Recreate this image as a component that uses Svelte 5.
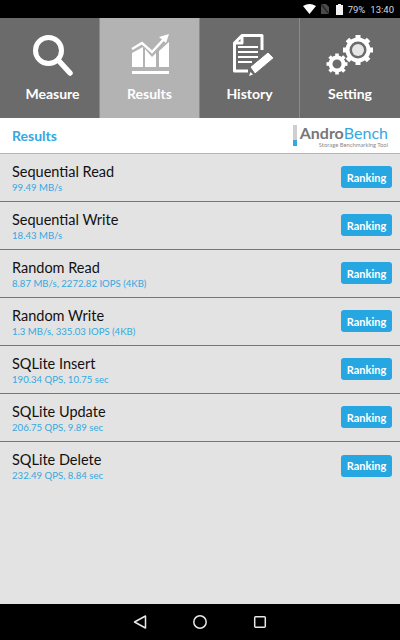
<script>
  const tabs = [
    { id: "measure", label: "Measure" },
    { id: "results", label: "Results", active: true },
    { id: "history", label: "History" },
    { id: "setting", label: "Setting" }
  ];

  const results = [
    { name: "Sequential Read", value: "99.49 MB/s" },
    { name: "Sequential Write", value: "18.43 MB/s" },
    { name: "Random Read", value: "8.87 MB/s, 2272.82 IOPS (4KB)" },
    { name: "Random Write", value: "1.3 MB/s, 335.03 IOPS (4KB)" },
    { name: "SQLite Insert", value: "190.34 QPS, 10.75 sec" },
    { name: "SQLite Update", value: "206.75 QPS, 9.89 sec" },
    { name: "SQLite Delete", value: "232.49 QPS, 8.84 sec" }
  ];

  const teeth = [0, 45, 90, 135, 180, 225, 270, 315];
</script>

<div class="screen">
  <div class="status">
    <svg class="wifi" width="13" height="10" viewBox="0 0 13 10"><path d="M0 2Q6.500 -2 13 2L6.500 10Z" fill="#fff" /></svg>
    <svg class="sim" width="8" height="10" viewBox="0 0 8 10"><path d="M0 0H5L8 3V10H0Z" fill="#4a4a4a" /><path d="M0 0L8 10" stroke="#222" stroke-width="1.200" /></svg>
    <svg class="battery" width="7" height="11" viewBox="0 0 7 11"><path d="M2 0H5V1H7V11H0V1H2Z" fill="#f2f2f2" /></svg>
    <span class="pct">79%</span>
    <span class="time">13:40</span>
  </div>

  <nav class="tabs">
    {#each tabs as tab}
      <div class="tab" class:active={tab.active}>
        <svg width="56" height="47" viewBox="0 0 56 47" fill="none">
          {#if tab.id === "measure"}
            <circle cx="26.500" cy="19.500" r="13" stroke="#fff" stroke-width="5" />
            <path d="M37 30L48 42" stroke="#fff" stroke-width="5.500" stroke-linecap="round" />
          {:else if tab.id === "results"}
            <path d="M10 22L21 16V36H10ZM23 18L30 26L34 22V36H23ZM37 20L47 11V36H37Z" fill="#fff" />
            <path d="M10 18L20 12L30 21L42 8" stroke="#fff" stroke-width="2.500" />
            <path d="M37 6L47 3L44 12Z" fill="#fff" />
            <rect x="10" y="40" width="37" height="3" fill="#fff" />
          {:else if tab.id === "history"}
            <path d="M20 4.500H40V19M26 40H12.500V12L20 4.500V12H12.500" stroke="#fff" stroke-width="3" stroke-linejoin="round" />
            <path d="M16 16H36M16 21H36M16 26H36M16 31H30" stroke="#fff" stroke-width="2" />
            <path d="M28 36L46 21L52 27L33 43Z" fill="#fff" stroke="#6b6b6b" stroke-width="1" />
            <path d="M27 45L28.500 41L31 43.500Z" fill="#fff" />
          {:else}
            <g transform="translate(36 19)">
              <circle r="10.500" stroke="#fff" stroke-width="4" />
              <circle r="6" fill="#e6e6e6" />
              {#each teeth as a}
                <rect x="-2.500" y="-15" width="5" height="4" fill="#fff" transform="rotate({a})" />
              {/each}
            </g>
            <g transform="translate(15 33)">
              <circle r="6.500" stroke="#fff" stroke-width="4" />
              {#each teeth as a}
                <rect x="-1.800" y="-10.500" width="3.600" height="3.500" fill="#fff" transform="rotate({a})" />
              {/each}
            </g>
          {/if}
        </svg>
        <span class="tab-label">{tab.label}</span>
      </div>
    {/each}
  </nav>

  <header class="title-bar">
    <span class="title">Results</span>
    <div class="logo">
      <span class="logo-mark"></span>
      <div class="logo-text">
        <div class="logo-name"><span class="andro">Andro</span><span class="bench">Bench</span></div>
        <div class="logo-sub">Storage Benchmarking Tool</div>
      </div>
    </div>
  </header>

  <main class="list">
    {#each results as row}
      <div class="row">
        <div class="info">
          <div class="name">{row.name}</div>
          <div class="value">{row.value}</div>
        </div>
        <button class="rank">Ranking</button>
      </div>
    {/each}
  </main>

  <footer class="softkeys">
    <svg width="14" height="14" viewBox="0 0 14 14" fill="none"><path d="M12.500 1V13L1.500 7Z" stroke="#e8e8e8" stroke-width="1.500" stroke-linejoin="round" /></svg>
    <svg width="14" height="14" viewBox="0 0 14 14" fill="none"><circle cx="7" cy="7" r="6.200" stroke="#e8e8e8" stroke-width="1.500" /></svg>
    <svg width="14" height="14" viewBox="0 0 14 14" fill="none"><rect x="1.700" y="1.700" width="10.600" height="10.600" rx="1" stroke="#e8e8e8" stroke-width="1.500" /></svg>
  </footer>
</div>

<style>
  :global(body) {
    margin: 0;
  }

  .screen {
    width: 400px;
    height: 640px;
    display: flex;
    flex-direction: column;
    background: #e3e3e3;
    font-family: Lato, "Noto Sans", sans-serif;
    overflow: hidden;
  }

  .status {
    height: 18px;
    flex: none;
    background: #000;
    color: #d8d8d8;
    display: flex;
    align-items: center;
    justify-content: flex-end;
    padding-right: 6px;
    font-family: Roboto, sans-serif;
    font-size: 9.500px;
  }

  .wifi {
    margin-right: 5px;
  }

  .sim {
    margin-right: 7px;
  }

  .battery {
    margin-right: 5px;
  }

  .pct {
    margin-right: 5px;
  }

  .tabs {
    height: 100px;
    flex: none;
    display: flex;
    background: #6b6b6b;
  }

  .tab {
    width: 100px;
    box-sizing: border-box;
    display: flex;
    flex-direction: column;
    align-items: center;
    padding-top: 13px;
    border-right: 1px solid #8a8a8a;
  }

  .tab:last-child {
    border-right: none;
  }

  .tab.active {
    background: #b3b3b3;
  }

  .tab-label {
    margin-top: 7px;
    color: #fff;
    font-size: 14px;
    font-weight: 700;
    line-height: 18px;
  }

  .tab:first-child .tab-label {
    margin-left: 6px;
  }

  .title-bar {
    height: 35px;
    flex: none;
    box-sizing: border-box;
    background: #fff;
    display: flex;
    align-items: center;
    justify-content: space-between;
    padding: 0 12px 0 12px;
  }

  .title {
    color: #35a8e0;
    font-size: 14px;
    font-weight: 700;
  }

  .logo {
    display: flex;
    align-items: center;
    gap: 3px;
  }

  .logo-mark {
    width: 4px;
    height: 21px;
    background: linear-gradient(#cfcfcf 0 70%, #35a8e0 70%);
  }

  .logo-text {
    display: flex;
    flex-direction: column;
    align-items: flex-end;
  }

  .logo-name {
    font-size: 16px;
    line-height: 18px;
  }

  .andro {
    color: #777;
    font-weight: 700;
  }

  .bench {
    color: #35a8e0;
  }

  .logo-sub {
    color: #8a8a8a;
    font-size: 5.800px;
    line-height: 6px;
  }

  .list {
    flex: 1;
    border-top: 1px solid #b5b5b5;
  }

  .row {
    height: 48px;
    box-sizing: border-box;
    display: flex;
    align-items: center;
    justify-content: space-between;
    padding: 0 8px 1px 12px;
    border-bottom: 1px solid #777;
  }

  .row:last-child {
    border-bottom: none;
  }

  .info {
    padding-bottom: 1px;
  }

  .name {
    color: #111;
    font-size: 14.500px;
    line-height: 21px;
  }

  .value {
    color: #35a8e0;
    font-size: 9.600px;
    line-height: 11px;
  }

  .rank {
    width: 51px;
    height: 22px;
    padding: 0;
    border: none;
    border-radius: 3px;
    background: #27a7e1;
    color: #fff;
    font-family: inherit;
    font-size: 11px;
    font-weight: 700;
  }

  .softkeys {
    height: 36px;
    flex: none;
    background: #000;
    display: flex;
    align-items: center;
    justify-content: center;
    gap: 46px;
  }
</style>
